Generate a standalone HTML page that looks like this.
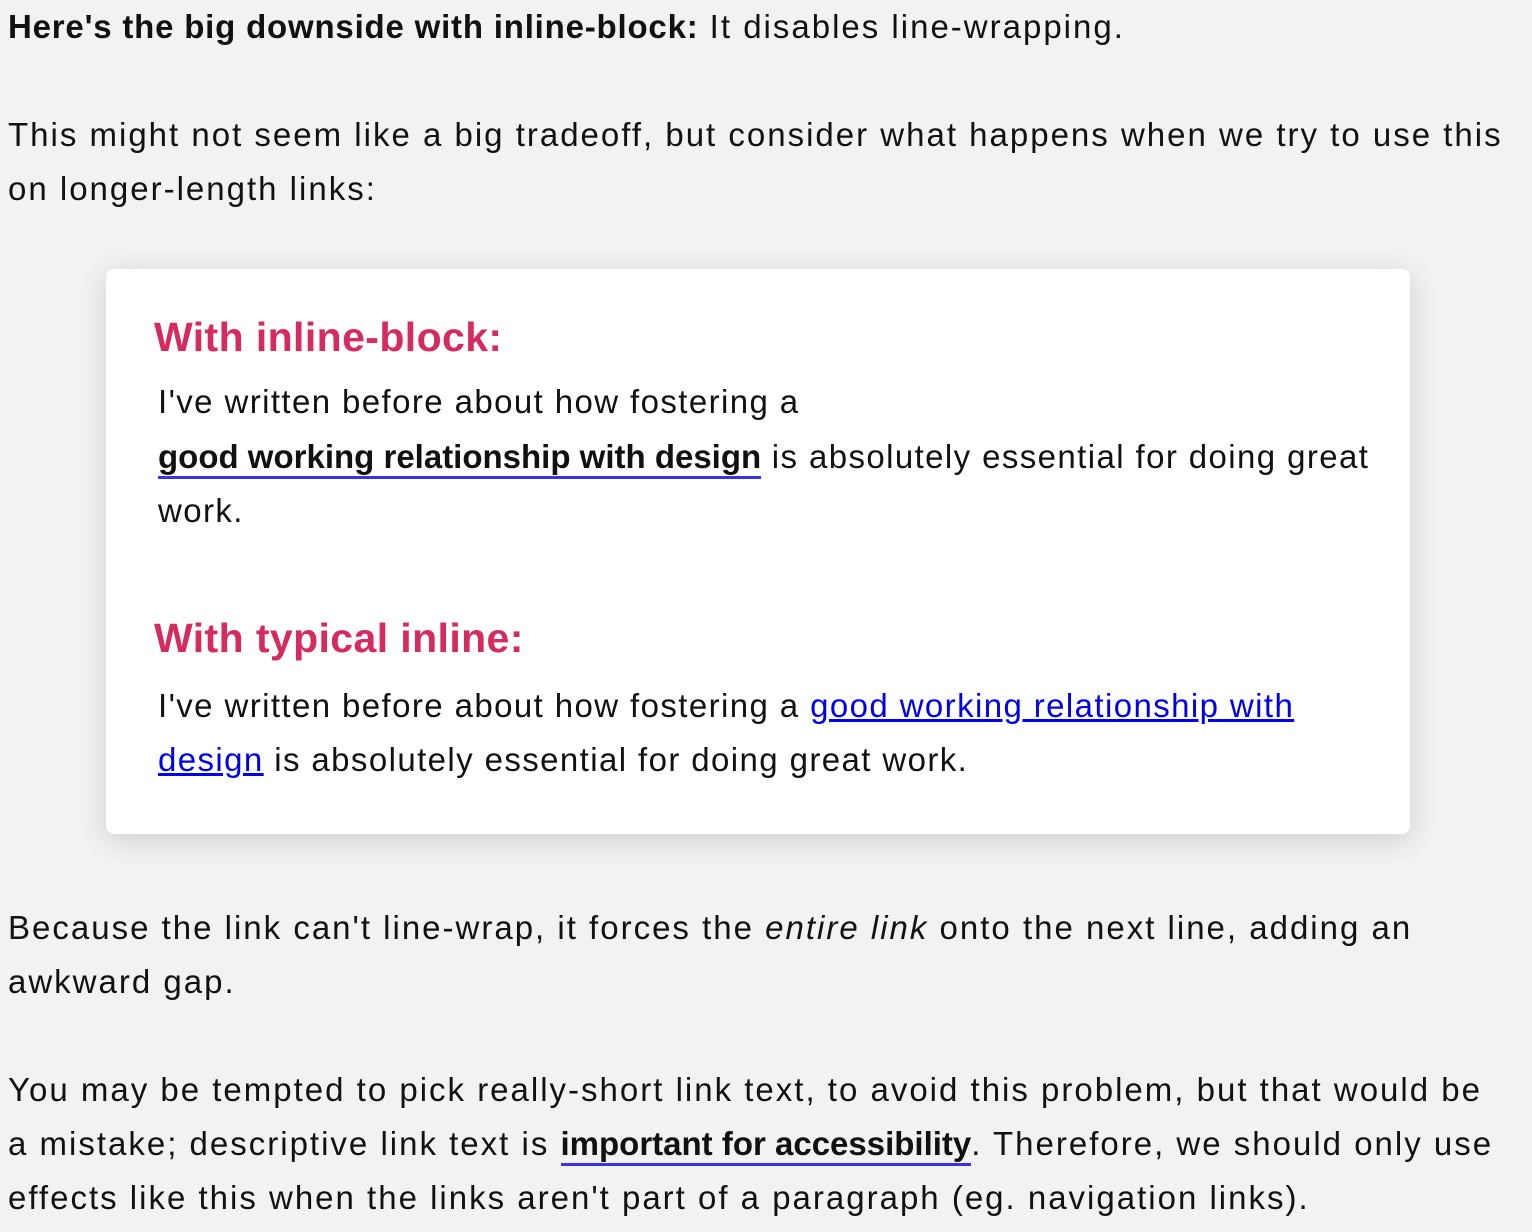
<!DOCTYPE html>
<html><head><meta charset="utf-8"><style>
html,body{margin:0;padding:0;background:#f2f2f2;width:1532px;height:1232px;overflow:hidden}
body{font-family:"Liberation Sans",sans-serif;color:#111;font-size:33px;letter-spacing:2px;position:relative}
.l{position:absolute;white-space:nowrap;line-height:54px;height:54px}
.c{letter-spacing:1.4px}
.card{position:absolute;left:106px;top:269px;width:1304px;height:565px;background:#fff;border-radius:8px;box-shadow:0 6px 30px rgba(0,0,0,0.15)}
h3{position:absolute;margin:0;color:#d52b5e;font-size:41px;letter-spacing:0.4px;font-weight:bold;line-height:54px;white-space:nowrap}
.bl{font-weight:bold;letter-spacing:0;border-bottom:3px solid #3b32e8;padding-bottom:1px}
b{letter-spacing:0.8px}
a{color:#0000ee;text-decoration:underline}
</style></head><body>
<div class="l" style="left:8px;top:0"><b>Here's the big downside with inline-block:</b> It disables line-wrapping.</div>
<div class="l" style="left:8px;top:108px">This might not seem like a big tradeoff, but consider what happens when we try to use this</div>
<div class="l" style="left:8px;top:162px">on longer-length links:</div>
<div class="card"></div>
<h3 style="left:154px;top:310px">With inline-block:</h3>
<div class="l c" style="left:158px;top:375px">I've written before about how fostering a</div>
<div class="l c" style="left:158px;top:430px"><span class="bl">good working relationship with design</span> is absolutely essential for doing great</div>
<div class="l c" style="left:158px;top:484px">work.</div>
<h3 style="left:154px;top:611px">With typical inline:</h3>
<div class="l c" style="left:158px;top:679px">I've written before about how fostering a <a>good working relationship with</a></div>
<div class="l c" style="left:158px;top:733px"><a>design</a> is absolutely essential for doing great work.</div>
<div class="l" style="left:8px;top:901px">Because the link can't line-wrap, it forces the <i>entire link</i> onto the next line, adding an</div>
<div class="l" style="left:8px;top:955px">awkward gap.</div>
<div class="l" style="left:8px;top:1063px">You may be tempted to pick really-short link text, to avoid this problem, but that would be</div>
<div class="l" style="left:8px;top:1117px">a mistake; descriptive link text is <span class="bl">important for accessibility</span>. Therefore, we should only use</div>
<div class="l" style="left:8px;top:1171px">effects like this when the links aren't part of a paragraph (eg. navigation links).</div>
</body></html>
